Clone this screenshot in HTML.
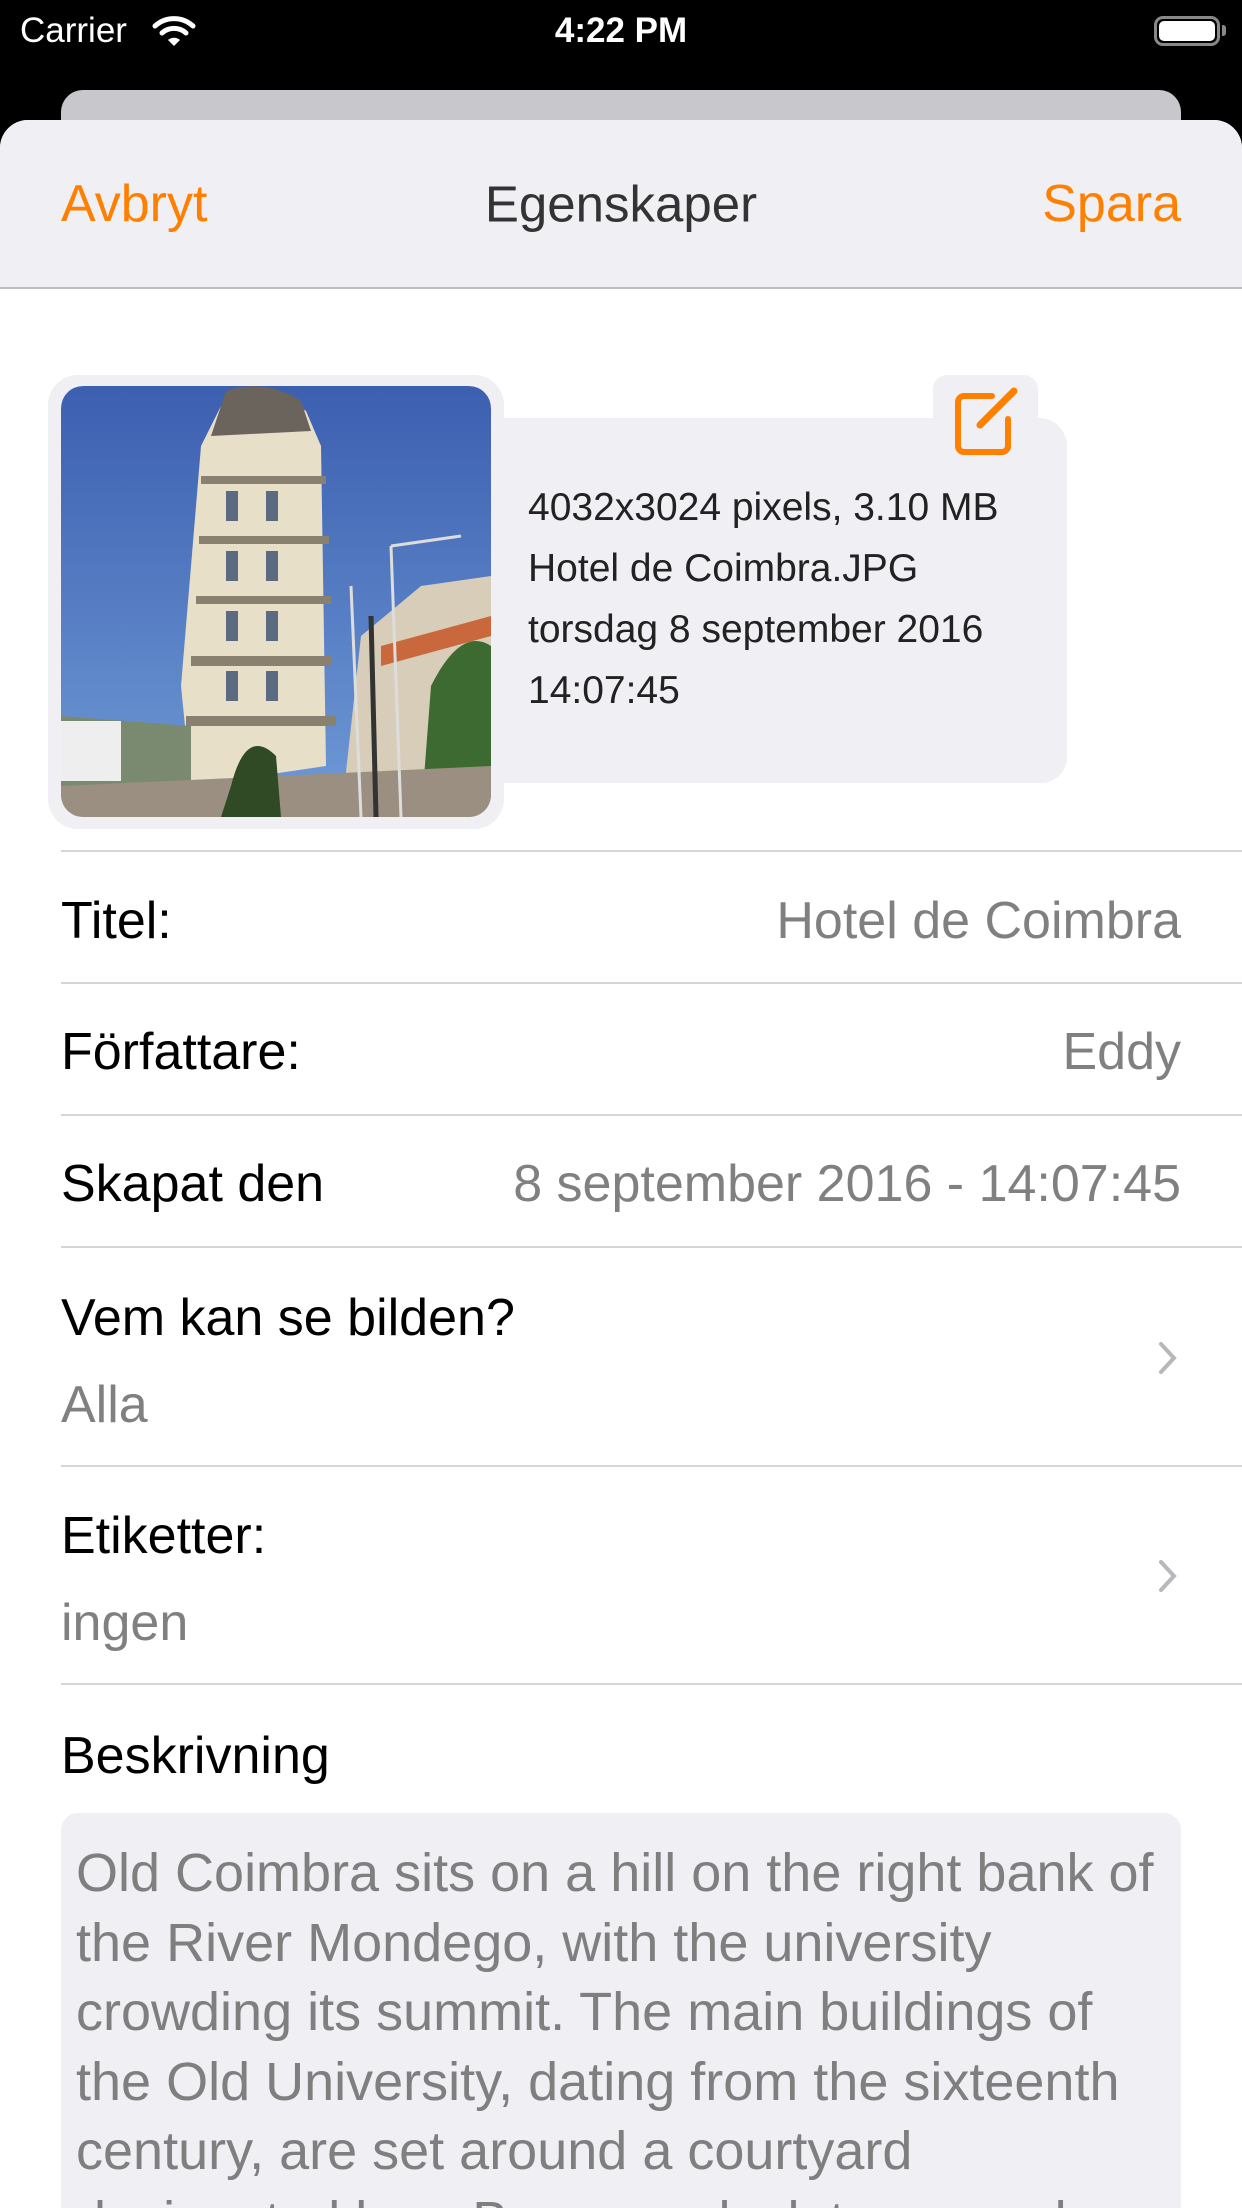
<!DOCTYPE html>
<html style="background:#fff"><head><meta charset="utf-8"><style>
*{margin:0;padding:0;box-sizing:border-box}
html,body{width:1242px;height:2208px;overflow:hidden}
#w{width:1242px;height:2208px;overflow:hidden;background:#000;font-family:"Liberation Sans",sans-serif;position:relative}
.a{position:absolute;white-space:nowrap}
.c{transform:translateY(-50%)}
</style></head><body><div id="w">
<div class="a c" style="left:20px;top:31px;color:#fff;font-size:35px">Carrier</div>
<svg class="a" style="left:152px;top:14px" width="44" height="34" viewBox="0 0 44 34"><path d="M3 12 A28 28 0 0 1 41 12" stroke="#fff" stroke-width="5" fill="none" stroke-linecap="round"/><path d="M10 19 A18 18 0 0 1 34 19" stroke="#fff" stroke-width="5" fill="none" stroke-linecap="round"/><path d="M16 26 L22 32 L28 26 A9 9 0 0 0 16 26Z" fill="#fff"/></svg>
<div class="a c" style="left:0;width:1242px;text-align:center;top:31px;color:#fff;font-size:35px;font-weight:bold">4:22 PM</div>
<div class="a" style="left:1154px;top:16px;width:66px;height:30px;border:3px solid #888;border-radius:9px"><div style="position:absolute;left:2px;top:2px;right:2px;bottom:2px;background:#fff;border-radius:5px"></div></div>
<div class="a" style="left:1222px;top:25px;width:4px;height:11px;background:#888;border-radius:0 3px 3px 0"></div>
<div class="a" style="left:61px;top:90px;width:1120px;height:60px;background:#c7c7cc;border-radius:22px 22px 0 0"></div>
<div class="a" style="left:0;top:120px;width:1242px;height:2088px;background:#fff;border-radius:28px 28px 0 0;overflow:hidden">
 <div style="position:absolute;left:0;top:0;width:1242px;height:169px;background:#efeff4;border-bottom:2px solid #bdbdc2"></div>
</div>
<div class="a c" style="left:61px;top:204px;color:#ff7f00;font-size:52px">Avbryt</div>
<div class="a c" style="left:0;width:1242px;text-align:center;top:204px;color:#333;font-size:51px">Egenskaper</div>
<div class="a c" style="right:61px;top:204px;color:#ff7f00;font-size:52px">Spara</div>

<div class="a" style="left:933px;top:375px;width:105px;height:60px;background:#efeff4;border-radius:14px 14px 0 0"></div>
<div class="a" style="left:480px;top:418px;width:587px;height:365px;background:#efeff4;border-radius:0 28px 26px 0"></div>
<svg class="a" style="left:950px;top:385px" width="75" height="75" viewBox="0 0 75 75"><path d="M42 11 H14 a6 6 0 0 0 -6 6 V61 a6 6 0 0 0 6 6 H52 a6 6 0 0 0 6 -6 V34" stroke="#ff7f00" stroke-width="6" fill="none" stroke-linecap="round"/><path d="M30 40 L64 6" stroke="#ff7f00" stroke-width="7" stroke-linecap="round"/><path d="M28 42 L33 37" stroke="#ff7f00" stroke-width="4"/></svg>
<div class="a" style="left:528px;top:477px;color:#222;font-size:39px;line-height:61px">4032x3024 pixels, 3.10 MB<br>Hotel de Coimbra.JPG<br>torsdag 8 september 2016<br>14:07:45</div>

<div class="a" style="left:48px;top:375px;width:456px;height:454px;background:#efeff4;border-radius:30px"></div>
<svg class="a" style="left:61px;top:386px;border-radius:22px" width="430" height="431" viewBox="0 0 430 431">
<defs><linearGradient id="sky" x1="0" y1="0" x2="0" y2="1"><stop offset="0" stop-color="#3c5fb0"/><stop offset="1" stop-color="#6f9ad6"/></linearGradient>
<clipPath id="cp"><rect width="430" height="431" rx="22"/></clipPath></defs>
<g clip-path="url(#cp)">
<rect width="430" height="431" fill="url(#sky)"/>
<path d="M160 20 Q200 -5 245 25 L260 60 L265 380 L130 400 L120 300 L140 60Z" fill="#e8dfc8"/>
<path d="M165 5 Q205 -8 240 15 L250 45 L150 50Z" fill="#6a645c"/>
<g fill="#8a8070"><rect x="140" y="90" width="125" height="8"/><rect x="138" y="150" width="130" height="8"/><rect x="135" y="210" width="135" height="8"/><rect x="130" y="270" width="140" height="10"/><rect x="125" y="330" width="150" height="10"/></g>
<g fill="#5b6a80"><rect x="165" y="105" width="12" height="30"/><rect x="205" y="105" width="12" height="30"/><rect x="165" y="165" width="12" height="30"/><rect x="205" y="165" width="12" height="30"/><rect x="165" y="225" width="12" height="30"/><rect x="205" y="225" width="12" height="30"/><rect x="165" y="285" width="12" height="30"/><rect x="205" y="285" width="12" height="30"/></g>
<path d="M300 250 L360 200 L430 190 L430 431 L280 431Z" fill="#d8cdb8"/>
<path d="M320 260 L430 230 L430 250 L320 280Z" fill="#c8683c"/>
<path d="M370 300 Q400 240 430 260 L430 431 L360 431Z" fill="#3d6a30"/>
<path d="M0 330 L130 340 L130 431 L0 431Z" fill="#7a8a70"/>
<rect x="0" y="335" width="60" height="60" fill="#eee"/>
<path d="M0 400 L430 380 L430 431 L0 431Z" fill="#9a8f80"/>
<path d="M170 400 Q185 340 215 370 L220 431 L160 431Z" fill="#2f4a25"/>
<g stroke="#ddd" stroke-width="3"><line x1="330" y1="160" x2="340" y2="431"/><line x1="290" y1="200" x2="300" y2="431"/><line x1="330" y1="160" x2="400" y2="150"/></g>
<line x1="310" y1="230" x2="315" y2="431" stroke="#333" stroke-width="5"/>
</g></svg>

<div class="a" style="left:61px;top:850px;width:1181px;height:2px;background:#d6d6d8"></div>
<div class="a" style="left:61px;top:982px;width:1181px;height:2px;background:#d6d6d8"></div>
<div class="a" style="left:61px;top:1114px;width:1181px;height:2px;background:#d6d6d8"></div>
<div class="a" style="left:61px;top:1246px;width:1181px;height:2px;background:#d6d6d8"></div>
<div class="a" style="left:61px;top:1465px;width:1181px;height:2px;background:#d6d6d8"></div>
<div class="a" style="left:61px;top:1683px;width:1181px;height:2px;background:#d6d6d8"></div>

<div class="a c" style="left:61px;top:921px;font-size:52px;color:#000">Titel:</div>
<div class="a c" style="right:61px;top:921px;font-size:52px;color:#808080">Hotel de Coimbra</div>
<div class="a c" style="left:61px;top:1052px;font-size:52px;color:#000">Författare:</div>
<div class="a c" style="right:61px;top:1052px;font-size:52px;color:#808080">Eddy</div>
<div class="a c" style="left:61px;top:1184px;font-size:52px;color:#000">Skapat den</div>
<div class="a c" style="right:61px;top:1184px;font-size:52px;color:#808080">8 september 2016 - 14:07:45</div>
<div class="a c" style="left:61px;top:1318px;font-size:52px;color:#000">Vem kan se bilden?</div>
<div class="a c" style="left:61px;top:1405px;font-size:52px;color:#808080">Alla</div>
<svg class="a" style="left:1157px;top:1340px" width="22" height="36" viewBox="0 0 22 36"><path d="M4 4 L17 18 L4 32" stroke="#b8b8bc" stroke-width="4" fill="none" stroke-linecap="round"/></svg>
<div class="a c" style="left:61px;top:1536px;font-size:52px;color:#000">Etiketter:</div>
<div class="a c" style="left:61px;top:1623px;font-size:52px;color:#808080">ingen</div>
<svg class="a" style="left:1157px;top:1558px" width="22" height="36" viewBox="0 0 22 36"><path d="M4 4 L17 18 L4 32" stroke="#b8b8bc" stroke-width="4" fill="none" stroke-linecap="round"/></svg>
<div class="a c" style="left:61px;top:1756px;font-size:52px;color:#000">Beskrivning</div>

<div class="a" style="left:61px;top:1813px;width:1120px;height:420px;background:#efeff4;border-radius:17px"></div>
<div class="a" style="left:76px;top:1839px;font-size:54px;line-height:69.5px;color:#7f7f7f">Old Coimbra sits on a hill on the right bank of<br>the River Mondego, with the university<br>crowding its summit. The main buildings of<br>the Old University, dating from the sixteenth<br>century, are set around a courtyard<br>designated by a Baroque clock tower and</div>
</div></body></html>
